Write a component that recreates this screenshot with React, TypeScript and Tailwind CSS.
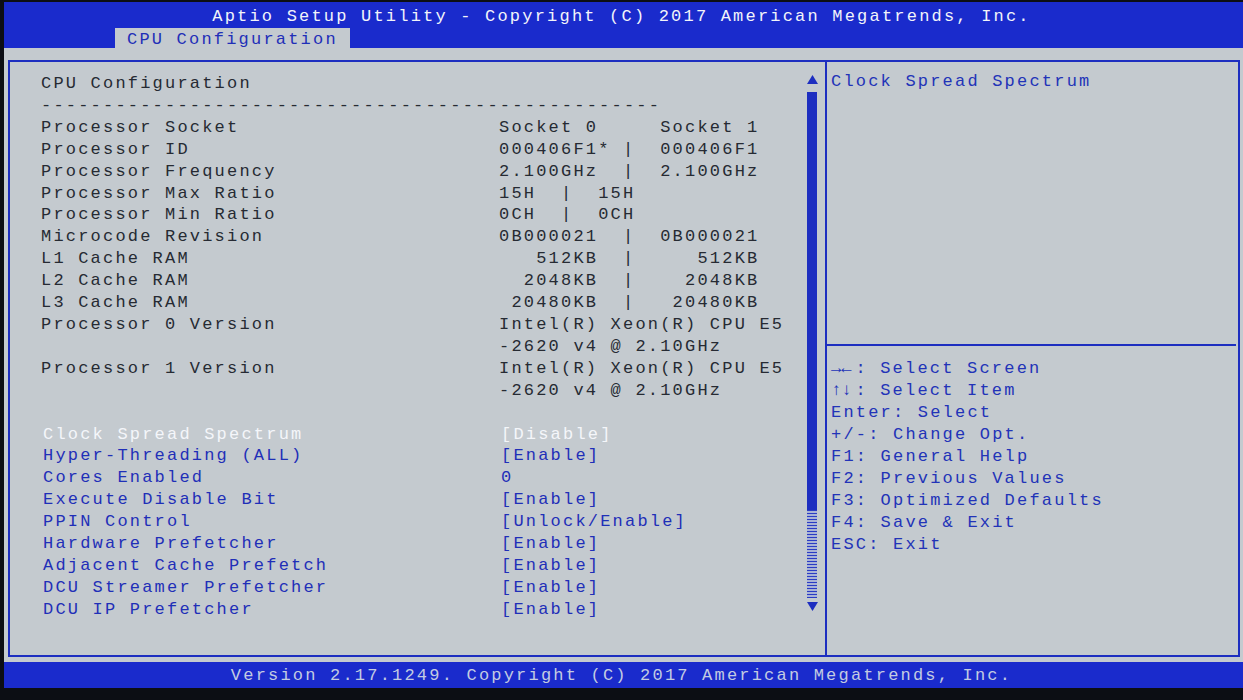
import React from 'react'

// ── Data ─────────────────────────────────────────────────────

const info: [string, string][] = [
  ['Processor Socket', 'Socket 0     Socket 1'],
  ['Processor ID', '000406F1* |  000406F1'],
  ['Processor Frequency', '2.100GHz  |  2.100GHz'],
  ['Processor Max Ratio', '15H  |  15H'],
  ['Processor Min Ratio', '0CH  |  0CH'],
  ['Microcode Revision', '0B000021  |  0B000021'],
  ['L1 Cache RAM', '   512KB  |     512KB'],
  ['L2 Cache RAM', '  2048KB  |    2048KB'],
  ['L3 Cache RAM', ' 20480KB  |   20480KB'],
  ['Processor 0 Version', 'Intel(R) Xeon(R) CPU E5'],
  ['', '-2620 v4 @ 2.10GHz'],
  ['Processor 1 Version', 'Intel(R) Xeon(R) CPU E5'],
  ['', '-2620 v4 @ 2.10GHz'],
  ['', ' '],
]

const settings: { label: string; value: string; selected?: boolean }[] = [
  { label: 'Clock Spread Spectrum', value: '[Disable]', selected: true },
  { label: 'Hyper-Threading (ALL)', value: '[Enable]' },
  { label: 'Cores Enabled', value: '0' },
  { label: 'Execute Disable Bit', value: '[Enable]' },
  { label: 'PPIN Control', value: '[Unlock/Enable]' },
  { label: 'Hardware Prefetcher', value: '[Enable]' },
  { label: 'Adjacent Cache Prefetch', value: '[Enable]' },
  { label: 'DCU Streamer Prefetcher', value: '[Enable]' },
  { label: 'DCU IP Prefetcher', value: '[Enable]' },
]

// [bold key glyphs, rest]
const help: [string, string][] = [
  ['→←', ': Select Screen'],
  ['↑↓', ': Select Item'],
  ['', 'Enter: Select'],
  ['', '+/-: Change Opt.'],
  ['', 'F1: General Help'],
  ['', 'F2: Previous Values'],
  ['', 'F3: Optimized Defaults'],
  ['', 'F4: Save & Exit'],
  ['', 'ESC: Exit'],
]

const mono = "font-['Liberation_Mono','DejaVu_Sans_Mono',monospace] text-[17px] tracking-[2.2px]"

// ── Scrollbar ────────────────────────────────────────────────

function Scrollbar() {
  return (
    <div className="w-[12px] mr-[7px] pt-[13px] flex flex-col items-center">
      <svg width="11" height="9" viewBox="0 0 11 9">
        <polygon points="5.5,0 11,9 0,9" fill="#1d2ec0" />
      </svg>
      <div className="mt-[8px] w-[10px] h-[418px] bg-[#1d2ec0]" />
      <div className="w-[10px] h-[88px] bg-[repeating-linear-gradient(0deg,#2b3cc4_0px,#2b3cc4_1px,#aab3d6_1px,#aab3d6_3px)]" />
      <svg className="mt-[4px]" width="11" height="9" viewBox="0 0 11 9">
        <polygon points="0,0 11,0 5.5,9" fill="#1d2ec0" />
      </svg>
    </div>
  )
}

// ── Main ─────────────────────────────────────────────────────

export default function App() {
  return (
    <div className={`w-[1243px] h-[700px] bg-[#0c0e14] pt-[2px] pl-[4px] overflow-hidden ${mono}`}>
      {/* Header */}
      <div className="h-[46px] bg-[#1a2bcc] flex flex-col">
        <div className="h-[26px] pt-[2px] leading-[26px] text-center text-[#f2f4fa] pr-[4px] whitespace-pre">
          Aptio Setup Utility - Copyright (C) 2017 American Megatrends, Inc.
        </div>
        <div className="flex">
          <div className="ml-[111px] h-[20px] pt-[2px] leading-[20px] px-[12px] bg-[#c4cacf] text-[#1f2fb8]">
            CPU Configuration
          </div>
        </div>
      </div>

      {/* Body */}
      <div className="h-[614px] bg-[#c4cacf] pl-[4px] pr-[3px] pt-[12px] pb-[5px]">
        <div className="h-full border-2 border-[#1d2ec0] flex">
          {/* Left panel */}
          <div className="w-[815px] flex">
            <div className="flex-1 pl-[31px] pt-[11px] leading-[21.9px]">
              <div className="text-[#262a33] whitespace-pre">CPU Configuration</div>
              <div className="text-[#262a33] whitespace-pre">{'-'.repeat(50)}</div>
              {info.map(([label, value], i) => (
                <div key={i} className="flex text-[#262a33] whitespace-pre">
                  <div className="w-[458px]">{label}</div>
                  <div>{value}</div>
                </div>
              ))}
              {settings.map((s) => (
                <div
                  key={s.label}
                  className={`flex pl-[2px] whitespace-pre ${s.selected ? 'text-[#f4f6fa]' : 'text-[#1f2fb8]'}`}
                >
                  <div className="w-[458px]">{s.label}</div>
                  <div>{s.value}</div>
                </div>
              ))}
            </div>
            <Scrollbar />
          </div>

          {/* Divider */}
          <div className="w-[2px] bg-[#1d2ec0]" />

          {/* Right panel */}
          <div className="flex-1 flex flex-col text-[#2233b8]">
            <div className="h-[282px] pl-[4px] pt-[9px] leading-[22px] whitespace-pre">Clock Spread Spectrum</div>
            <div className="h-[2px] bg-[#1d2ec0] mr-[2px]" />
            <div className="pl-[4px] pt-[12px] leading-[22px]">
              {help.map(([keys, rest]) => (
                <div key={rest} className="whitespace-pre">
                  {keys && <span className="font-bold tracking-[0px] mr-[4px]">{keys}</span>}
                  {rest}
                </div>
              ))}
            </div>
          </div>
        </div>
      </div>

      {/* Footer */}
      <div className="h-[26px] leading-[26px] pt-[1px] bg-[#1a2bcc] text-center text-[#c3cbe2] whitespace-pre pr-[4px]">
        Version 2.17.1249. Copyright (C) 2017 American Megatrends, Inc.
      </div>
    </div>
  )
}
